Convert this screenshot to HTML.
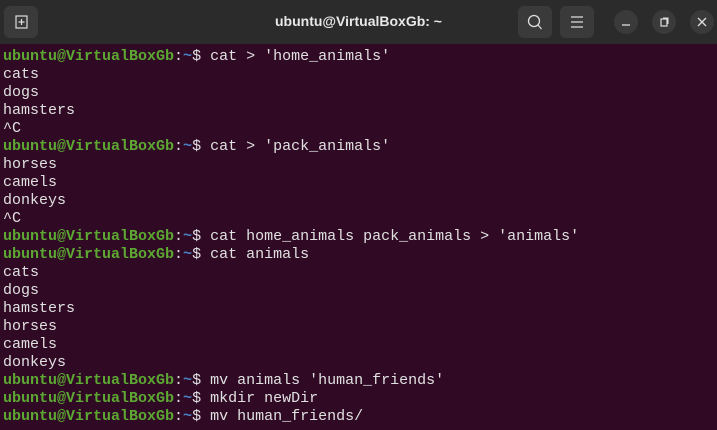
<!DOCTYPE html>
<html><head><style>
body{margin:0;width:717px;height:430px;overflow:hidden;background:#300a24;font-family:"Liberation Sans",sans-serif}
.hdr{position:absolute;left:0;top:0;width:717px;height:44px;background:#2b2b2b;}
.title{position:absolute;left:0;width:717px;top:13px;text-align:center;color:#e8e8e8;font-weight:bold;font-size:14px}
.btn{position:absolute;top:6px;width:34px;height:32px;background:#3a3a3a;border-radius:6px}
.circ{position:absolute;top:10px;width:24px;height:24px;border-radius:50%;background:#3a3a3a}
pre{position:absolute;left:3px;top:48px;margin:0;font-family:"Liberation Mono",monospace;font-size:15px;line-height:18px;color:#e0e0e0}
.g{color:#5ca832;font-weight:bold}.b{color:#4a7fc4;font-weight:bold}
</style></head><body>
<div class="hdr">
<div class="btn" style="left:4px"><svg width="34" height="32"><rect x="12" y="10" width="11" height="12" fill="none" stroke="#ddd" stroke-width="1.2"/><path d="M14.5 16h6M17.5 13v6" stroke="#ddd" stroke-width="1.2"/></svg></div>
<div class="title">ubuntu@VirtualBoxGb: ~</div>
<div class="btn" style="left:518px"><svg width="34" height="32"><circle cx="16" cy="15" r="5.5" fill="none" stroke="#ddd" stroke-width="1.3"/><path d="M20 19l3.5 4" stroke="#ddd" stroke-width="1.3"/></svg></div>
<div class="btn" style="left:560px"><svg width="34" height="32"><path d="M11 11h12M11 16h12M11 21h12" stroke="#ddd" stroke-width="1.2"/></svg></div>
<div class="circ" style="left:614px"><svg width="24" height="24"><path d="M8 15h8" stroke="#ddd" stroke-width="1.3"/></svg></div>
<div class="circ" style="left:652px"><svg width="24" height="24"><rect x="9" y="9" width="6" height="7" fill="none" stroke="#ddd" stroke-width="1.2"/><path d="M11 8h5v6" fill="none" stroke="#ddd"/></svg></div>
<div class="circ" style="left:690px"><svg width="24" height="24"><path d="M8 8l8 8M16 8l-8 8" stroke="#ddd" stroke-width="1.3"/></svg></div>
</div>
<pre><span class="g">ubuntu@VirtualBoxGb</span>:<span class="b">~</span>$ cat &gt; 'home_animals'
cats
dogs
hamsters
^C
<span class="g">ubuntu@VirtualBoxGb</span>:<span class="b">~</span>$ cat &gt; 'pack_animals'
horses
camels
donkeys
^C
<span class="g">ubuntu@VirtualBoxGb</span>:<span class="b">~</span>$ cat home_animals pack_animals &gt; 'animals'
<span class="g">ubuntu@VirtualBoxGb</span>:<span class="b">~</span>$ cat animals
cats
dogs
hamsters
horses
camels
donkeys
<span class="g">ubuntu@VirtualBoxGb</span>:<span class="b">~</span>$ mv animals 'human_friends'
<span class="g">ubuntu@VirtualBoxGb</span>:<span class="b">~</span>$ mkdir newDir
<span class="g">ubuntu@VirtualBoxGb</span>:<span class="b">~</span>$ mv human_friends/
</pre>
</body></html>
